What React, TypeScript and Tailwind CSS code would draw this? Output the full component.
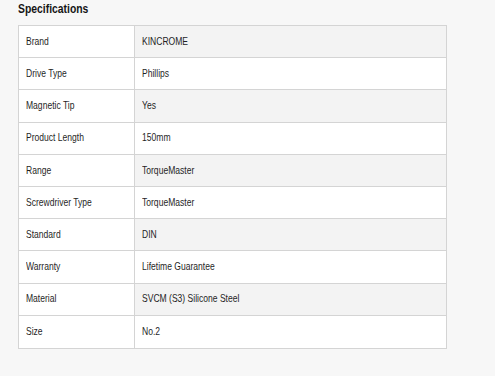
import React from "react";

const rows: [string, string][] = [
  ["Brand", "KINCROME"],
  ["Drive Type", "Phillips"],
  ["Magnetic Tip", "Yes"],
  ["Product Length", "150mm"],
  ["Range", "TorqueMaster"],
  ["Screwdriver Type", "TorqueMaster"],
  ["Standard", "DIN"],
  ["Warranty", "Lifetime Guarantee"],
  ["Material", "SVCM (S3) Silicone Steel"],
  ["Size", "No.2"],
];

function Narrow({ children }: { children: React.ReactNode }) {
  return <span className="inline-block origin-left scale-x-[0.83] whitespace-nowrap">{children}</span>;
}

export default function App() {
  return (
    <div
      className="w-[495px] h-[376px] bg-[#f7f7f7] overflow-hidden"
      style={{ fontFamily: "'Liberation Sans', Arial, sans-serif" }}
    >
      <div className="pl-[18px] pt-[1px] h-[25px] text-[12.5px] font-bold text-[#151515] leading-[17px]">
        <Narrow>Specifications</Narrow>
      </div>
      <div className="ml-[18px] w-[429px] border border-[#d4d4d4] bg-white">
        {rows.map(([k, v], i) => (
          <div
            key={k}
            className={`grid grid-cols-[116px_1fr] h-[32.2px] ${i < rows.length - 1 ? "border-b border-[#d4d4d4]" : ""}`}
          >
            <div className="flex items-center pl-[7px] border-r border-[#d4d4d4] bg-white text-[10.3px] text-[#1f1f1f]">
              <Narrow>{k}</Narrow>
            </div>
            <div
              className={`flex items-center pl-[7px] text-[10.3px] text-[#1f1f1f] ${i % 2 === 0 ? "bg-[#f3f3f3]" : "bg-white"}`}
            >
              <Narrow>{v}</Narrow>
            </div>
          </div>
        ))}
      </div>
    </div>
  );
}
